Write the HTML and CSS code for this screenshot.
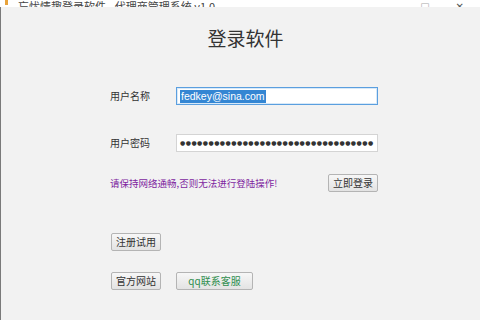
FILE: index.html
```html
<!DOCTYPE html>
<html>
<head>
<meta charset="utf-8">
<link rel="stylesheet" href="styles.css">
</head>
<body>
<div class="titlebar">
  <span class="app-icon"></span>
  <span class="title-text">忘忧情趣登录软件 - 代理商管理系统 v1.0</span>
  <span class="ctrl max">□</span>
  <span class="ctrl close">✕</span>
</div>
<div class="window">
  <h1 class="heading">登录软件</h1>
  <div class="row field-row r1">
    <span class="label">用户名称</span>
    <div class="input focused"><span class="sel">fedkey@sina.com</span></div>
  </div>
  <div class="row field-row r2">
    <span class="label">用户密码</span>
    <div class="input"><span class="dots">●●●●●●●●●●●●●●●●●●●●●●●●●●●●●●●●●●</span></div>
  </div>
  <div class="row msg-row r3">
    <span class="msg">请保持网络通畅,否则无法进行登陆操作!</span>
    <button class="btn">立即登录</button>
  </div>
  <div class="row r4">
    <button class="btn first">注册试用</button>
  </div>
  <div class="row field-row r5">
    <button class="btn first">官方网站</button>
    <button class="btn wide qq">qq联系客服</button>
  </div>
</div>
</body>
</html>
```

FILE: styles.css
```css
html, body {
  margin: 0;
  padding: 0;
  background: #f2f2f2;
  font-family: "Noto Sans CJK SC", "Liberation Sans", sans-serif;
  overflow: hidden;
}
.titlebar {
  height: 7px;
  background: #ffffff;
  display: flex;
  align-items: flex-end;
  overflow: hidden;
}
.app-icon {
  width: 3px;
  height: 5px;
  background: #e8a23a;
  margin-left: 5px;
  align-self: flex-start;
}
.title-text {
  font-size: 11px;
  line-height: 11px;
  color: #444;
  margin-left: 10px;
  margin-bottom: -5px;
  white-space: nowrap;
}
.ctrl {
  font-size: 10px;
  line-height: 10px;
  color: #555;
  margin-bottom: -5px;
  font-family: "DejaVu Sans", sans-serif;
}
.ctrl.max { margin-left: auto; margin-right: 26px; color: #aaa; }
.ctrl.close { margin-right: 16px; }
.window {
  display: flow-root;
  height: 313px;
  border-left: 1px solid #7a7a7a;
  box-sizing: border-box;
  padding-left: 109px;
}
.heading {
  margin: 19px 0 0 -109px;
  padding-left: 10px;
  text-align: center;
  font-size: 19px;
  line-height: 24px;
  font-weight: 400;
  color: #333;
}
.row {
  height: 18px;
  display: flex;
  align-items: center;
}
.field-row {
  display: grid;
  grid-template-columns: 66px 202px;
  align-items: center;
}
.r1 { margin-top: 37px; }
.r2 { margin-top: 29px; }
.r3 { margin-top: 22px; }
.r4 { margin-top: 41px; }
.r5 { margin-top: 21px; }
.label {
  font-size: 10px;
  color: #333;
  line-height: 18px;
}
.input {
  height: 18px;
  box-sizing: border-box;
  background: #fff;
  border: 1px solid #d4d4d4;
  display: flex;
  align-items: center;
  padding-left: 3px;
  overflow: hidden;
}
.input.focused {
  border-color: #5b9fdf;
  box-shadow: inset 0 0 0 1px #d8e9f8;
}
.sel {
  background: #3486d3;
  color: #fff;
  font-family: "Liberation Sans", sans-serif;
  font-size: 10.5px;
  line-height: 13px;
  padding: 0 1px;
}
.dots {
  font-family: "DejaVu Sans", sans-serif;
  font-size: 6px;
  letter-spacing: 0.46px;
  color: #333;
  line-height: 16px;
  white-space: nowrap;
}
.msg-row {
  width: 268px;
  justify-content: space-between;
}
.msg {
  font-size: 9.5px;
  color: #7e1fa0;
  white-space: nowrap;
}
.btn {
  width: 50px;
  height: 18px;
  box-sizing: border-box;
  padding: 0;
  border: 1px solid #b4b4b4;
  border-radius: 2px;
  background: linear-gradient(#f7f7f7, #e3e3e3);
  font-family: "Noto Sans CJK SC", sans-serif;
  font-size: 10px;
  line-height: 16px;
  color: #333;
}
.btn.first { margin-left: 1px; }
.btn.wide { width: 77px; }
.btn.qq { color: #2f8e4e; }
```
